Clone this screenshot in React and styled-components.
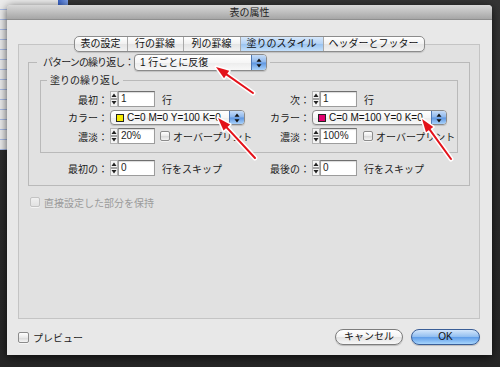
import React from "react";
import styled, { createGlobalStyle } from "styled-components";

const GlobalStyle = createGlobalStyle`
  html, body { margin:0; padding:0; background:#2b2b2b; }
  body {
    font-family: "Liberation Sans", "Noto Sans CJK JP", sans-serif;
    font-size:10px;
    color:#1c1c1c;
  }
  * { box-sizing:border-box; }
`;

const Screen = styled.div`
position:relative;
width:500px;
height:367px;
overflow:hidden;
padding:5px 0 0 7px;
background:linear-gradient(#353535, #2a2a2a 60%, #262626);
`;

// window lying behind the dialog, top left
const BackWindow = styled.div`
position:absolute;
left:0;
top:0;
width:68px;
height:150px;
background:
  repeating-linear-gradient(180deg, transparent 0 9px, #a9bce8 9px 10px),
  #ececec;
&::after{
  content:"";
  position:absolute;
  right:0;
  top:0;
  width:10px;
  height:6px;
  background:linear-gradient(90deg,#3a64c8,#7fa3ee);
}
`;

const Dialog = styled.div`
position:relative;
z-index:1;
width:485px;
height:350px;
display:flex;
flex-direction:column;
background:#e8e8e8;
border-radius:4px 4px 0 0;
box-shadow:0 2px 10px rgba(0,0,0,.7);
`;

const TitleBar = styled.div`
height:15px;
line-height:15px;
text-align:center;
font-size:10px;
color:#222;
border-radius:4px 4px 0 0;
border-bottom:1px solid #8e8e8e;
background:linear-gradient(#d8d8d8, #bababa 60%, #a6a6a6);
`;

const Body = styled.div`
flex:1;
display:flex;
flex-direction:column;
padding:16px 12px 0 11px;
`;

const Tabs = styled.div`
align-self:center;
position:relative;
z-index:2;
display:flex;
height:16px;
margin-bottom:-8px;
border:1px solid #8c8c8c;
border-radius:5px;
overflow:hidden;
background:linear-gradient(#ffffff, #f1f1f1 50%, #e4e4e4 51%, #f2f2f2);
box-shadow:0 1px 1px rgba(0,0,0,.15);
`;

const Tab = styled.div`
width:${p => p.$w}px;
line-height:14px;
text-align:center;
font-size:10px;
color:#111;
border-left:${p => p.$first ? "none" : "1px solid #a9a9a9"};
background:${p => p.$active
  ? "linear-gradient(#d7e8fb, #b1d1f5 50%, #98c2f0 51%, #c4e0fb)"
  : "transparent"};
`;

const Panel = styled.div`
height:275px;
border:1px solid #c4c4c4;
background:#e1e1e1;
padding:9px 9px 0 9px;
`;

const Group = styled.fieldset`
margin:0;
min-width:0;
border:1px solid #b9b9b9;
padding:${p => p.$pad};
`;

const Legend = styled.legend`
display:flex;
align-items:center;
margin-left:${p => p.$ml}px;
padding:0 3px 0 ${p => p.$pl}px;
font-size:10px;
color:#1c1c1c;
line-height:13px;
`;

const LegendLabel = styled.span`
width:91px;
letter-spacing:-0.9px;
white-space:nowrap;
`;

const Row = styled.div`
display:grid;
grid-template-columns:${p => p.$lw}px 150px 52px auto;
align-items:center;
height:${p => p.$h || 18}px;
margin-top:${p => p.$mt || 0}px;
`;

const Label = styled.span`
text-align:right;
padding-right:2px;
white-space:nowrap;
`;

const Control = styled.div`
display:flex;
align-items:center;
`;

const StepperBox = styled.svg`
display:block;
flex:none;
`;

const Field = styled.div`
width:37px;
height:16px;
line-height:14px;
padding-left:2px;
background:#fff;
border:1px solid #9c9c9c;
border-top-color:#6f6f6f;
box-shadow:inset 0 1px 1px rgba(0,0,0,.15);
color:#1d1d1d;
`;

const Unit = styled.span`
margin-left:${p => p.$ml || 7}px;
white-space:nowrap;
color:${p => p.$muted ? "#9b9b9b" : "#1c1c1c"};
`;

const Box = styled.span`
flex:none;
width:${p => p.$s || 9}px;
height:${p => p.$s || 9}px;
margin-left:${p => p.$ml || 0}px;
border:1px solid ${p => p.$muted ? "#c3c3c3" : "#8b8b8b"};
border-radius:2px;
background:${p => p.$muted
  ? "linear-gradient(#f0f0f0,#e2e2e2)"
  : "linear-gradient(#ffffff,#e9e9e9 50%,#d8d8d8 51%,#f4f4f4)"};
box-shadow:0 1px 0 rgba(255,255,255,.6);
`;

const Popup = styled.div`
display:flex;
align-items:center;
width:${p => p.$w}px;
height:${p => p.$h}px;
border:1px solid #8a8a8a;
border-radius:4px;
overflow:hidden;
background:linear-gradient(#ffffff, #f6f6f6 50%, #ececec 51%, #f8f8f8);
box-shadow:0 1px 1px rgba(0,0,0,.15);
`;

const PopupText = styled.span`
flex:1;
padding-left:${p => p.$pl || 4}px;
white-space:nowrap;
color:#111;
`;

const Swatch = styled.span`
flex:none;
width:8px;
height:8px;
margin-left:5px;
margin-right:2px;
border:1px solid #222;
background:${p => p.$c};
`;

const PopupArrow = styled.span`
flex:none;
width:15px;
height:100%;
display:flex;
align-items:center;
justify-content:center;
border-left:1px solid #4f79b5;
background:linear-gradient(#c6dcf7, #8cb6ec 48%, #5d95e0 52%, #a9d2fb);
`;

const Keep = styled.div`
display:flex;
align-items:center;
height:14px;
margin:9px 0 0 2px;
`;

const Footer = styled.div`
flex:1;
display:flex;
align-items:center;
justify-content:space-between;
padding:0 12px 0 11px;
`;

const Preview = styled.div`
display:flex;
align-items:center;
`;

const Buttons = styled.div`
display:flex;
gap:8px;
`;

const Button = styled.div`
width:${p => p.$w}px;
height:16px;
line-height:14px;
text-align:center;
font-size:10px;
color:#111;
border-radius:8px;
border:1px solid ${p => p.$primary ? "#3a5e97" : "#7d7d7d"};
background:${p => p.$primary
  ? "linear-gradient(#d3e6fb, #8fbdf0 50%, #5e9ce8 51%, #a7d5fc)"
  : "linear-gradient(#ffffff, #f3f3f3 50%, #e3e3e3 51%, #f7f7f7)"};
box-shadow:0 1px 1px rgba(0,0,0,.2);
`;

const Overlay = styled.svg`
position:absolute;
left:0;
top:0;
z-index:5;
pointer-events:none;
`;

const Stepper = () => (
  <StepperBox width="8" height="16" viewBox="0 0 8 16">
    <rect x="0.5" y="0.5" width="7" height="15" fill="#f4f4f4" stroke="#b4b4b4" />
    <polygon points="4,2.5 1.5,6 6.5,6" fill="#222" />
    <line x1="1" y1="8" x2="7" y2="8" stroke="#555" strokeWidth="1" />
    <polygon points="1.5,10 6.5,10 4,13.5" fill="#222" />
  </StepperBox>
);

const UpDown = () => (
  <svg width="6" height="10" viewBox="0 0 6 10">
    <polygon points="3,0.5 0.5,3.8 5.5,3.8" fill="#111" />
    <polygon points="0.5,6.2 5.5,6.2 3,9.5" fill="#111" />
  </svg>
);

const ColorPopup = ({ color, text }) => (
  <Popup $w={135} $h={15}>
    <Swatch $c={color} />
    <PopupText $pl={1}>{text}</PopupText>
    <PopupArrow><UpDown /></PopupArrow>
  </Popup>
);

const Arrow = ({ from, to }) => {
  const [x1, y1] = from;
  const [x2, y2] = to;
  const len = Math.hypot(x2 - x1, y2 - y1);
  const ux = (x2 - x1) / len;
  const uy = (y2 - y1) / len;
  const hl = 13;
  const hw = 4.5;
  const bx = x2 - ux * hl;
  const by = y2 - uy * hl;
  const pts = `${x2},${y2} ${bx - uy * hw},${by + ux * hw} ${bx + uy * hw},${by - ux * hw}`;
  return (
    <g>
      <line x1={x1} y1={y1} x2={bx} y2={by} stroke="#fff" strokeWidth="5" strokeLinecap="round" />
      <polygon points={pts} fill="#fff" stroke="#fff" strokeWidth="3" strokeLinejoin="round" />
      <line x1={x1} y1={y1} x2={bx + ux * 2} y2={by + uy * 2} stroke="#e3121a" strokeWidth="2" strokeLinecap="round" />
      <polygon points={pts} fill="#e3121a" />
    </g>
  );
};

const tabs = [
  { t: "表の設定", w: 52 },
  { t: "行の罫線", w: 56 },
  { t: "列の罫線", w: 57 },
  { t: "塗りのスタイル", w: 83, active: true },
  { t: "ヘッダーとフッター", w: 101 },
];

export default function App() {
  return (
    <>
      <GlobalStyle />
      <Screen>
        <BackWindow />
        <Dialog>
          <TitleBar>表の属性</TitleBar>
          <Body>
            <Tabs>
              {tabs.map((tab, i) => (
                <Tab key={tab.t} $w={tab.w} $first={i === 0} $active={tab.active}>{tab.t}</Tab>
              ))}
            </Tabs>
            <Panel>
              <Group $pad="3px 11px 8px 11px">
                <Legend $ml={-3} $pl={6}>
                  <LegendLabel>パターンの繰り返し：</LegendLabel>
                  <Popup $w={133} $h={17}>
                    <PopupText $pl={5}>1 行ごとに反復</PopupText>
                    <PopupArrow><UpDown /></PopupArrow>
                  </Popup>
                </Legend>
                <Group $pad="3px 0 7px 0">
                  <Legend $ml={6} $pl={3}>塗りの繰り返し</Legend>
                  <Row $lw={69}>
                    <Label>最初：</Label>
                    <Control><Stepper /><Field>1</Field><Unit>行</Unit></Control>
                    <Label>次：</Label>
                    <Control><Stepper /><Field>1</Field><Unit>行</Unit></Control>
                  </Row>
                  <Row $lw={69} $h={19}>
                    <Label>カラー：</Label>
                    <Control><ColorPopup color="#f5ea00" text="C=0 M=0 Y=100 K=0" /></Control>
                    <Label>カラー：</Label>
                    <Control><ColorPopup color="#e2006e" text="C=0 M=100 Y=0 K=0" /></Control>
                  </Row>
                  <Row $lw={69} $h={18}>
                    <Label>濃淡：</Label>
                    <Control>
                      <Stepper /><Field>20%</Field>
                      <Box $ml={5} $s={10} /><Unit $ml={3}>オーバープリント</Unit>
                    </Control>
                    <Label>濃淡：</Label>
                    <Control>
                      <Stepper /><Field>100%</Field>
                      <Box $ml={6} $s={10} /><Unit $ml={3}>オーバープリント</Unit>
                    </Control>
                  </Row>
                </Group>
                <Row $lw={70} $h={18} $mt={6}>
                  <Label>最初の：</Label>
                  <Control><Stepper /><Field>0</Field><Unit>行をスキップ</Unit></Control>
                  <Label>最後の：</Label>
                  <Control><Stepper /><Field>0</Field><Unit>行をスキップ</Unit></Control>
                </Row>
              </Group>
              <Keep>
                <Box $muted $s={10} />
                <Unit $ml={4} $muted>直接設定した部分を保持</Unit>
              </Keep>
            </Panel>
          </Body>
          <Footer>
            <Preview>
              <Box $s={11} />
              <Unit $ml={4}>プレビュー</Unit>
            </Preview>
            <Buttons>
              <Button $w={68}>キャンセル</Button>
              <Button $w={69} $primary>OK</Button>
            </Buttons>
          </Footer>
        </Dialog>
        <Overlay width="500" height="367" viewBox="0 0 500 367">
          <Arrow from={[253, 93]} to={[216, 67]} />
          <Arrow from={[255, 158]} to={[218, 118]} />
          <Arrow from={[451, 159]} to={[422, 119]} />
        </Overlay>
      </Screen>
    </>
  );
}
